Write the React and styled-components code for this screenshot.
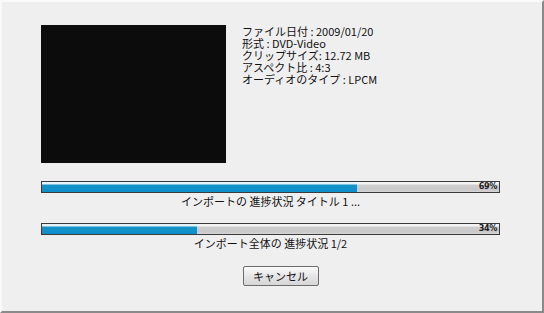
import React from 'react'
import styled, { createGlobalStyle } from 'styled-components'

const GlobalStyle = createGlobalStyle`
  html, body { margin: 0; padding: 0; }
  body {
    width: 544px;
    height: 313px;
    overflow: hidden;
    background: #efefef;
    font-family: "Noto Sans CJK JP", "Liberation Sans", sans-serif;
  }
`

const Frame = styled.div`
  box-sizing: border-box;
  width: 544px;
  height: 313px;
  background: #efefef;
  border-top: 2px solid #fafafa;
  border-left: 2px solid #fafafa;
  border-right: 2px solid #8a8a8a;
  border-bottom: 2px solid #8a8a8a;
  padding: 23px 0 0 39px;
  display: flex;
  flex-direction: column;
`

const Top = styled.div`
  display: flex;
  gap: 16px;
`

const Video = styled.div`
  width: 185px;
  height: 138px;
  background: #0c0c0c;
`

const Info = styled.div`
  font-size: 11px;
  line-height: 12px;
  color: #111;
`

const Section = styled.div`
  margin-top: ${(p) => p.$top}px;
  width: 459px;
  display: flex;
  flex-direction: column;
  align-items: center;
`

const Track = styled.div`
  position: relative;
  box-sizing: border-box;
  width: 459px;
  height: 12px;
  border: 1px solid #3a3a3a;
  background: linear-gradient(#f4f4f4 0, #f4f4f4 2px, #cfcfcf 3px, #c8c8c8 8px, #d8d8d8 100%);
`

const Fill = styled.div`
  height: 100%;
  background: linear-gradient(#e6f3f8 0, #e6f3f8 2px, #1592c8 3px, #0e8fcb 100%);
`

const Percent = styled.span`
  position: absolute;
  right: 2px;
  top: -1px;
  font-family: "DejaVu Sans Condensed", "Liberation Sans", sans-serif;
  font-size: 9px;
  font-weight: bold;
  line-height: 11px;
  color: #222;
  letter-spacing: -0.4px;
`

const Label = styled.div`
  margin-top: 1px;
  font-size: 11px;
  line-height: 14px;
  color: #111;
`

const Button = styled.button`
  margin-top: 16px;
  margin-left: 20px;
  width: 76px;
  height: 20px;
  padding: 0;
  border: 1px solid #6c6c6c;
  border-radius: 2px;
  background: linear-gradient(#fbfbfb, #e6e6e6 50%, #d6d6d6);
  font-family: "Noto Sans CJK JP", "Liberation Sans", sans-serif;
  font-size: 11px;
  color: #111;
`

const Bar = ({ value }) => (
  <Track>
    <Fill style={{ width: `${value}%` }} />
    <Percent>{value}%</Percent>
  </Track>
)

export default function App() {
  return (
    <>
      <GlobalStyle />
      <Frame>
        <Top>
          <Video />
          <Info>
            <div>ファイル日付 : 2009/01/20</div>
            <div>形式 : DVD-Video</div>
            <div>クリップサイズ: 12.72 MB</div>
            <div>アスペクト比 : 4:3</div>
            <div>オーディオのタイプ : LPCM</div>
          </Info>
        </Top>
        <Section $top={18}>
          <Bar value={69} />
          <Label>インポートの 進捗状況 タイトル 1 ...</Label>
        </Section>
        <Section $top={15}>
          <Bar value={34} />
          <Label>インポート全体の 進捗状況 1/2</Label>
        </Section>
        <Section $top={0}>
          <Button>キャンセル</Button>
        </Section>
      </Frame>
    </>
  )
}
